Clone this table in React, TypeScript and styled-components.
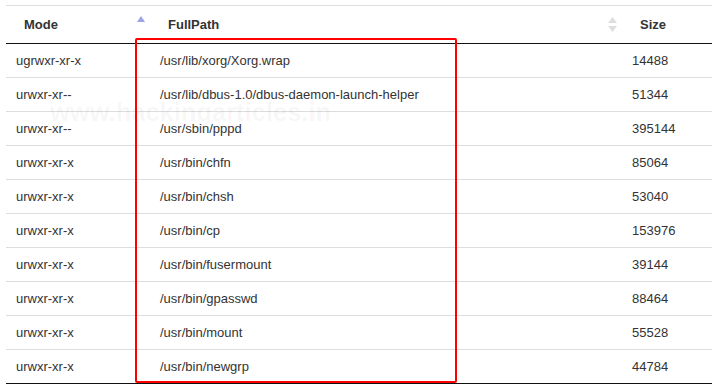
import React from 'react';
import styled, { createGlobalStyle } from 'styled-components';

const GlobalStyle = createGlobalStyle`
  html, body {
    margin: 0;
    padding: 0;
    background: #fff;
    overflow: hidden;
  }
  body {
    font-family: 'Liberation Sans', Arial, sans-serif;
  }
`;

const Page = styled.div`
  position: relative;
  width: 712px;
  height: 389px;
  padding: 5px 0 0 6px;
  box-sizing: border-box;
  overflow: hidden;
`;

const Table = styled.table`
  width: 720px;
  border-collapse: collapse;
  table-layout: fixed;
  border-top: 1px solid #dddddd;
  font-size: 13px;
  color: #333333;
`;

const HeadCell = styled.th<{ $width?: number }>`
  width: ${({ $width }) => ($width ? `${$width}px` : 'auto')};
  height: 38px;
  padding: 0 5px 0 18px;
  box-sizing: border-box;
  border-bottom: 1px solid #111111;
  text-align: left;
  font-weight: bold;
  color: #333333;
`;

const HeadInner = styled.div`
  display: flex;
  align-items: center;
  justify-content: space-between;
`;

const Cell = styled.td`
  height: 33px;
  padding: 0 10px;
  border-bottom: 1px solid #dddddd;
  white-space: nowrap;
`;

const Row = styled.tr`
  &:last-child td {
    border-bottom: 1px solid #111111;
  }
`;

const SortAsc = () => (
  <svg width="8" height="6" viewBox="0 0 8 6" style={{ marginTop: -11 }}>
    <path d="M4 0 L8 6 L0 6 Z" fill="#9ea2e8" />
  </svg>
);

const SortBoth = () => (
  <svg width="9" height="15" viewBox="0 0 9 15">
    <path d="M4.5 0 L9 6 L0 6 Z" fill="#dedede" />
    <path d="M4.5 15 L9 9 L0 9 Z" fill="#dedede" />
  </svg>
);

const Highlight = styled.div`
  position: absolute;
  left: 135px;
  top: 38px;
  width: 322px;
  height: 345px;
  border: 2px solid #ff0000;
  border-radius: 2px;
  box-sizing: border-box;
  pointer-events: none;
`;

const Watermark = styled.div`
  position: absolute;
  left: 50px;
  top: 98px;
  font-size: 25.5px;
  font-weight: bold;
  color: rgba(0, 0, 0, 0.045);
  white-space: nowrap;
  pointer-events: none;
`;

const rows = [
  { mode: 'ugrwxr-xr-x', path: '/usr/lib/xorg/Xorg.wrap', size: 14488 },
  { mode: 'urwxr-xr--', path: '/usr/lib/dbus-1.0/dbus-daemon-launch-helper', size: 51344 },
  { mode: 'urwxr-xr--', path: '/usr/sbin/pppd', size: 395144 },
  { mode: 'urwxr-xr-x', path: '/usr/bin/chfn', size: 85064 },
  { mode: 'urwxr-xr-x', path: '/usr/bin/chsh', size: 53040 },
  { mode: 'urwxr-xr-x', path: '/usr/bin/cp', size: 153976 },
  { mode: 'urwxr-xr-x', path: '/usr/bin/fusermount', size: 39144 },
  { mode: 'urwxr-xr-x', path: '/usr/bin/gpasswd', size: 88464 },
  { mode: 'urwxr-xr-x', path: '/usr/bin/mount', size: 55528 },
  { mode: 'urwxr-xr-x', path: '/usr/bin/newgrp', size: 44784 },
];

const App = () => {
  return (
    <Page>
      <GlobalStyle />
      <Table>
        <thead>
          <tr>
            <HeadCell $width={144}>
              <HeadInner>
                <span>Mode</span>
                <SortAsc />
              </HeadInner>
            </HeadCell>
            <HeadCell $width={472}>
              <HeadInner>
                <span>FullPath</span>
                <SortBoth />
              </HeadInner>
            </HeadCell>
            <HeadCell>
              <HeadInner>
                <span>Size</span>
              </HeadInner>
            </HeadCell>
          </tr>
        </thead>
        <tbody>
          {rows.map((r, i) => (
            <Row key={i}>
              <Cell>{r.mode}</Cell>
              <Cell>{r.path}</Cell>
              <Cell>{r.size}</Cell>
            </Row>
          ))}
        </tbody>
      </Table>
      <Watermark aria-hidden="true">www.hackingarticles.in</Watermark>
      <Highlight />
    </Page>
  );
};

export default App;
